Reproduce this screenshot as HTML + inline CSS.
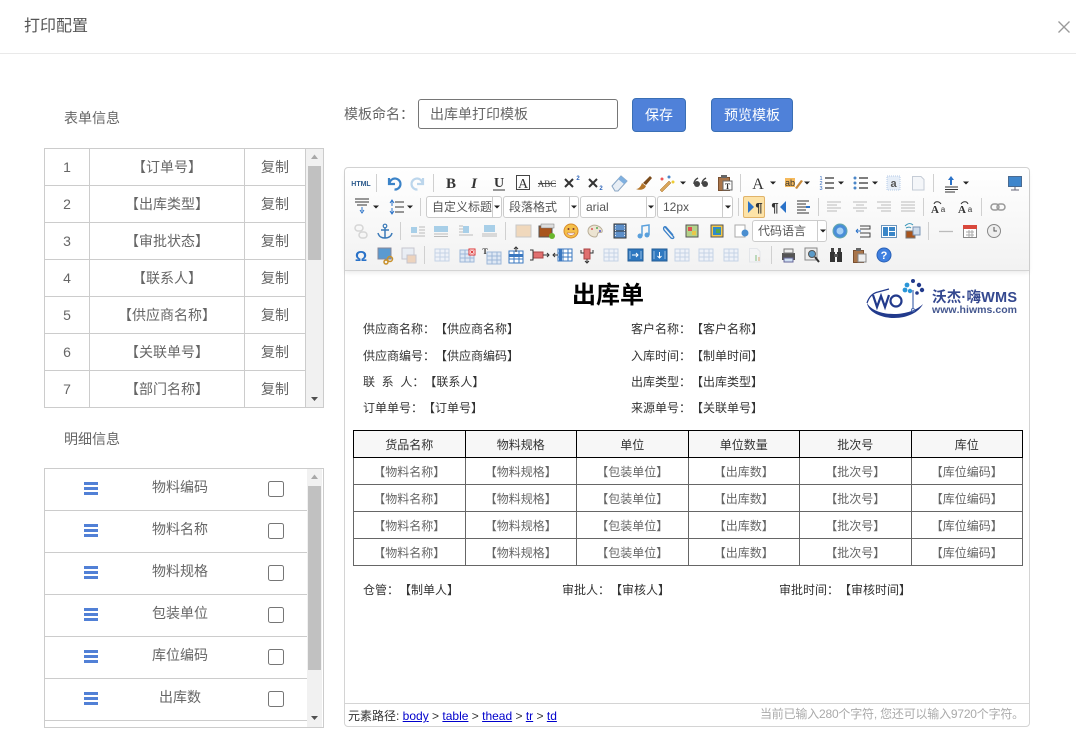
<!DOCTYPE html>
<html lang="zh"><head><meta charset="utf-8"><title>打印配置</title>
<style>
html,body{margin:0;padding:0;background:#fff}
body{width:1076px;height:740px;overflow:hidden;position:relative;font-family:"Liberation Sans","Noto Sans CJK SC",sans-serif;font-size:14px;color:#666;text-spacing-trim:space-all;font-kerning:none}
.a{position:absolute}
.t{position:absolute;white-space:nowrap;line-height:20px;height:20px}
.c{text-align:center}
.l{position:absolute;background:#ccc}
.e{font-size:12px;color:#333;line-height:16px;height:16px}
.sel{position:absolute;background:#fff;border:1px solid #ccc;border-radius:3px;height:20px;box-sizing:content-box;font-size:12px;color:#555;line-height:20px;overflow:hidden;white-space:nowrap}
.sel b{position:absolute;top:0;bottom:0;width:1px;background:#ccc}
.sel span{position:absolute;top:0;overflow:hidden}
table{border-collapse:collapse;table-layout:fixed;position:absolute;left:353px;top:430px;width:670px;font-size:12px}
td,th{text-align:center;font-weight:normal;padding:0}
td{border:1px solid #666;height:26px;color:#666}
th{border:1px solid #000;color:#333;height:26px;background:#f7f7f7}
.cb{position:absolute;left:268px;width:14px;height:14px;border:1px solid #767676;border-radius:2.500px;background:#fff}
.bar{position:absolute;left:84px;width:14px;height:3px;background:#5180d6;box-shadow:0 5px 0 #5180d6,0 10px 0 #5180d6}
</style></head><body>
<div class="t" style="left:24px;top:17px;font-size:16px;color:#555">打印配置</div>
<div class="a" style="left:0;top:53px;width:1076px;height:1px;background:#e9e9e9"></div>
<svg class="a" style="left:1056px;top:19px" width="16" height="16"><path d="M2.500 2.500L13.500 13.500M13.500 2.500L2.500 13.500" stroke="#999" stroke-width="1.300"/></svg>

<div class="t" style="left:64px;top:108px">表单信息</div>
<div class="a" style="left:44px;top:148px;width:278px;height:258px;border:1px solid #ccc"></div>
<div class="l" style="left:89px;top:149px;width:1px;height:258px"></div>
<div class="l" style="left:244px;top:149px;width:1px;height:258px"></div>
<div class="l" style="left:305px;top:149px;width:1px;height:258px"></div>
<div class="l" style="left:45px;top:185px;width:260px;height:1px"></div>
<div class="l" style="left:45px;top:222px;width:260px;height:1px"></div>
<div class="l" style="left:45px;top:259px;width:260px;height:1px"></div>
<div class="l" style="left:45px;top:296px;width:260px;height:1px"></div>
<div class="l" style="left:45px;top:333px;width:260px;height:1px"></div>
<div class="l" style="left:45px;top:370px;width:260px;height:1px"></div>
<div class="a" style="left:306px;top:149px;width:17px;height:258px;background:#f1f1f1"></div>
<div class="a" style="left:308px;top:166px;width:13px;height:94px;background:#c1c1c1"></div>

<div class="t c" style="left:45px;top:157px;width:44px">1</div><div class="t c" style="left:90px;top:157px;width:154px">【订单号】</div><div class="t c" style="left:245px;top:157px;width:60px">复制</div>
<div class="t c" style="left:45px;top:194px;width:44px">2</div><div class="t c" style="left:90px;top:194px;width:154px">【出库类型】</div><div class="t c" style="left:245px;top:194px;width:60px">复制</div>
<div class="t c" style="left:45px;top:231px;width:44px">3</div><div class="t c" style="left:90px;top:231px;width:154px">【审批状态】</div><div class="t c" style="left:245px;top:231px;width:60px">复制</div>
<div class="t c" style="left:45px;top:268px;width:44px">4</div><div class="t c" style="left:90px;top:268px;width:154px">【联系人】</div><div class="t c" style="left:245px;top:268px;width:60px">复制</div>
<div class="t c" style="left:45px;top:305px;width:44px">5</div><div class="t c" style="left:90px;top:305px;width:154px">【供应商名称】</div><div class="t c" style="left:245px;top:305px;width:60px">复制</div>
<div class="t c" style="left:45px;top:342px;width:44px">6</div><div class="t c" style="left:90px;top:342px;width:154px">【关联单号】</div><div class="t c" style="left:245px;top:342px;width:60px">复制</div>
<div class="t c" style="left:45px;top:379px;width:44px">7</div><div class="t c" style="left:90px;top:379px;width:154px">【部门名称】</div><div class="t c" style="left:245px;top:379px;width:60px">复制</div>

<div class="t" style="left:64px;top:429px">明细信息</div>
<div class="a" style="left:44px;top:468px;width:278px;height:258px;border:1px solid #ccc"></div>
<div class="l" style="left:45px;top:510px;width:262px;height:1px"></div>
<div class="l" style="left:45px;top:552px;width:262px;height:1px"></div>
<div class="l" style="left:45px;top:594px;width:262px;height:1px"></div>
<div class="l" style="left:45px;top:636px;width:262px;height:1px"></div>
<div class="l" style="left:45px;top:678px;width:262px;height:1px"></div>
<div class="l" style="left:45px;top:720px;width:262px;height:1px"></div>
<div class="a" style="left:307px;top:469px;width:15px;height:258px;background:#f1f1f1"></div>
<div class="a" style="left:308px;top:486px;width:13px;height:184px;background:#c1c1c1"></div>

<div class="bar" style="top:482px"></div><div class="t c" style="left:120px;top:477px;width:120px">物料编码</div><div class="cb" style="top:481px"></div>
<div class="bar" style="top:524px"></div><div class="t c" style="left:120px;top:519px;width:120px">物料名称</div><div class="cb" style="top:523px"></div>
<div class="bar" style="top:566px"></div><div class="t c" style="left:120px;top:561px;width:120px">物料规格</div><div class="cb" style="top:565px"></div>
<div class="bar" style="top:608px"></div><div class="t c" style="left:120px;top:603px;width:120px">包装单位</div><div class="cb" style="top:607px"></div>
<div class="bar" style="top:650px"></div><div class="t c" style="left:120px;top:645px;width:120px">库位编码</div><div class="cb" style="top:649px"></div>
<div class="bar" style="top:692px"></div><div class="t c" style="left:120px;top:687px;width:120px">出库数</div><div class="cb" style="top:691px"></div>

<div class="t" style="left:344px;top:104px">模板命名：</div>
<div class="a" style="left:418px;top:99px;width:198px;height:28px;border:1px solid #767676;border-radius:3px"></div>
<div class="t" style="left:430px;top:104px">出库单打印模板</div>
<div class="a c" style="left:632px;top:98px;width:52px;height:32px;background:#4f81d9;border:1px solid #3a6fb5;border-radius:4px;color:#fff;line-height:32px">保存</div>
<div class="a c" style="left:711px;top:98px;width:80px;height:32px;background:#4f81d9;border:1px solid #3a6fb5;border-radius:4px;color:#fff;line-height:32px">预览模板</div>

<!-- editor -->
<div class="a" style="left:344px;top:167px;width:684px;height:558px;border:1px solid #d4d4d4;border-radius:4px;background:#fff"></div>
<div class="a" style="left:345px;top:168px;width:684px;height:102px;border-radius:4px 4px 0 0;background:linear-gradient(#fff,#f2f2f2);border-bottom:1px solid #d4d4d4;box-shadow:0 2px 4px rgba(0,0,0,.08)"></div>

<div class="sel" style="left:426px;top:196px;width:74px"><span style="left:5px;width:60px">自定义标题</span><b style="left:65px"></b></div>
<div class="sel" style="left:503px;top:196px;width:74px"><span style="left:5px;width:60px">段落格式</span><b style="left:65px"></b></div>
<div class="sel" style="left:580px;top:196px;width:74px"><span style="left:5px;width:60px">arial</span><b style="left:65px"></b></div>
<div class="sel" style="left:657px;top:196px;width:74px"><span style="left:5px;width:60px">12px</span><b style="left:64px"></b></div>
<div class="sel" style="left:752px;top:220px;width:73px"><span style="left:5px;width:60px">代码语言</span><b style="left:64px"></b></div>
<div class="a" style="left:743px;top:196px;width:20px;height:20px;background:#fde3a7;border:1px solid #e0b36a;border-radius:2px"></div>

<svg class="a" style="left:0;top:0" width="1076" height="740" font-family="Liberation Serif,serif">
<defs>
<polygon id="ar" points="-3,-1.500 3,-1.500 0,1.500" fill="#222"/>
<g id="tb"><rect x="-7" y="-6" width="14" height="12" fill="#dfe8f4" stroke="#9db7d8"/><path d="M-7-2H7M-7 2H7M-2-6V6M3-6V6" stroke="#9db7d8" fill="none"/></g>
<g id="tbd"><rect x="-7" y="-6" width="14" height="12" fill="#eef2f8" stroke="#c5d3e6"/><path d="M-7-2H7M-7 2H7M-2-6V6M3-6V6" stroke="#c5d3e6" fill="none"/></g>
<g id="tbb"><rect x="-7" y="-6" width="14" height="12" fill="#fff" stroke="#3b78c0"/><path d="M-7-2H7M-7 2H7M-2-6V6M3-6V6" stroke="#3b78c0" fill="none"/></g>
<path id="al" d="M-7-5H7M-7-2H3M-7 1H7M-7 4H3" stroke="#bbb" stroke-width="1" fill="none"/>
<g id="ins"><rect x="-7" y="-4" width="6" height="6" fill="#a8cfe8"/><path d="M1-4H7M1-1H7M1 2H7M-7 5H7" stroke="#bbb" fill="none"/></g>
</defs>
<!-- separators -->
<g stroke="#d0d0d0"><path d="M376.500 174V192M433.500 174V192M740.500 174V192M933.500 174V192M420.500 198V216M738.500 198V216M818.500 198V216M923.500 198V216M981.500 198V216M400.500 222V240M505.500 222V240M928.500 222V240M424.500 246V264M771.500 246V264"/></g>
<!-- row 1 -->
<text x="361" y="186" font-family="Liberation Sans" font-size="7" font-weight="bold" fill="#2c5a8c" text-anchor="middle">HTML</text>
<path d="M389 178v6h6M389.500 183.500a5.500 5.500 0 1 1 5 6" fill="none" stroke="#3b83c8" stroke-width="2.200"/>
<path d="M423 178v6h-6M422.500 183.500a5.500 5.500 0 1 0-5 6" fill="none" stroke="#bcd6ec" stroke-width="2.200"/>
<text x="451" y="188" font-size="15" font-weight="bold" fill="#333" text-anchor="middle">B</text>
<text x="474" y="188" font-size="15" font-style="italic" font-weight="bold" fill="#333" text-anchor="middle">I</text>
<text x="499" y="187" font-size="14" font-weight="bold" fill="#333" text-anchor="middle">U</text><path d="M493 190H505" stroke="#333"/>
<rect x="516.500" y="175.500" width="13" height="14" fill="none" stroke="#444"/><text x="523" y="188" font-size="14" fill="#333" text-anchor="middle">A</text>
<text x="547" y="187" font-size="9" fill="#444" text-anchor="middle">ABC</text><path d="M538 183.500H556" stroke="#444"/>
<path d="M565 179l8 8M573 179l-8 8M589 179l8 8M597 179l-8 8" stroke="#333" stroke-width="2"/>
<text x="578" y="180" font-family="Liberation Sans" font-size="6" font-weight="bold" fill="#2a62b8" text-anchor="middle">2</text>
<text x="601" y="190" font-family="Liberation Sans" font-size="6" font-weight="bold" fill="#2a62b8" text-anchor="middle">2</text>
<path d="M612 186l9-10 6 5-9 10h-3z" fill="#e8eef5" stroke="#8aa6c4"/><path d="M618 179l6 5 3-3-6-5z" fill="#7fb0e0"/>
<path d="M636 189c3 0 5-3 6-6l4 3c-1 3-5 5-10 3z" fill="#b5762a"/><path d="M643 183l7-7 2 2-6 7z" fill="#7a4a1a"/>
<path d="M660 190l9-9 2 2-9 9z" fill="#d9a55a" stroke="#a8702a" stroke-width=".5"/><circle cx="662" cy="179" r="1.500" fill="#e55"/><circle cx="669" cy="177" r="1.500" fill="#4a86c8"/><circle cx="673" cy="182" r="1.500" fill="#ec3"/>
<use href="#ar" x="683" y="183"/>
<circle cx="697" cy="184" r="3" fill="#444"/><path d="M694 184c0-3 2-5 4-6" stroke="#444" fill="none" stroke-width="1.500"/><circle cx="705" cy="184" r="3" fill="#444"/><path d="M702 184c0-3 2-5 4-6" stroke="#444" fill="none" stroke-width="1.500"/>
<rect x="718.500" y="177.500" width="11" height="13" fill="#a9754a" stroke="#7a5030"/><rect x="721" y="175" width="6" height="3" fill="#666"/><rect x="723" y="181" width="9" height="9" fill="#fff" stroke="#666"/><text x="727.500" y="189" font-size="8" font-weight="bold" fill="#333" text-anchor="middle">T</text>
<text x="758" y="189" font-size="16" fill="#333" text-anchor="middle">A</text><use href="#ar" x="773" y="183"/>
<rect x="785" y="178" width="10" height="9" fill="#f5b95b"/><text x="790" y="186" font-family="Liberation Sans" font-size="9" fill="#333" text-anchor="middle">ab</text><path d="M795 188l6-8 2 1-6 8z" fill="#c98a3a"/><use href="#ar" x="807" y="183"/>
<path d="M825 178H834M825 183H834M825 188H834" stroke="#333" stroke-width="1.200"/><text x="821" y="180" font-family="Liberation Sans" font-size="5.500" fill="#2a62b8" text-anchor="middle">1</text><text x="821" y="185" font-family="Liberation Sans" font-size="5.500" fill="#2a62b8" text-anchor="middle">2</text><text x="821" y="190" font-family="Liberation Sans" font-size="5.500" fill="#2a62b8" text-anchor="middle">3</text><use href="#ar" x="841" y="183"/>
<path d="M859 178H868M859 183H868M859 188H868" stroke="#333" stroke-width="1.200"/><circle cx="855" cy="178" r="1.500" fill="#4a86c8"/><circle cx="855" cy="183" r="1.500" fill="#4a86c8"/><circle cx="855" cy="188" r="1.500" fill="#4a86c8"/><use href="#ar" x="875" y="183"/>
<rect x="887" y="176" width="13" height="14" fill="#e6eef8" stroke="#b5cbe6" stroke-dasharray="1 1"/><text x="893.500" y="187" font-family="Liberation Sans" font-size="11" font-weight="bold" fill="#555" text-anchor="middle">a</text>
<path d="M912.500 176.500H921l3 3V190H912.500z" fill="#f4f6f9" stroke="#c5ccd6"/>
<path d="M945 187H958M945 189.500H958M945 192H955" stroke="#333"/><path d="M951 176l-3 4h2v5h2v-5h2z" fill="#2a72c8"/><use href="#ar" x="966" y="183"/>
<rect x="1008.500" y="176.500" width="13" height="10" fill="#3f86cc" stroke="#4a6a90"/><path d="M1011 190H1019M1015 187V190" stroke="#667"/>
<!-- row 2 -->
<path d="M355 199H369M355 202H369M357 205H367" stroke="#333"/><path d="M362 207v4M360 210l2 3 2-3" stroke="#2a72c8" fill="none"/><use href="#ar" x="376" y="207"/>
<path d="M395 202H404M395 207H404M395 212H404" stroke="#333"/><path d="M390 203l2-3 2 3M392 201V206M390 211l2 3 2-3M392 208V213" stroke="#2a72c8" fill="none"/><use href="#ar" x="410" y="207"/>
<use href="#ar" x="497" y="207"/><use href="#ar" x="574" y="207"/><use href="#ar" x="651" y="207"/><use href="#ar" x="728" y="207"/><use href="#ar" x="823" y="231"/>
<polygon points="748,201 748,213 754,207" fill="#2a72c8"/><text x="759" y="212" font-family="Liberation Sans" font-size="13" font-weight="bold" fill="#333" text-anchor="middle">¶</text>
<text x="775" y="212" font-family="Liberation Sans" font-size="13" font-weight="bold" fill="#333" text-anchor="middle">¶</text><polygon points="786,201 786,213 780,207" fill="#2a72c8"/>
<path d="M797 201H809M797 204H806M797 207H806M797 210H806M797 213H809" stroke="#333"/><path d="M806 207h4" stroke="#2a72c8" stroke-width="2"/>
<use href="#al" x="834" y="207"/><path d="M853 202H867M856 205H864M853 208H867M856 211H864" stroke="#bbb"/><path d="M877 202H891M881 205H891M877 208H891M881 211H891" stroke="#bbb"/><path d="M901 202H915M901 205H915M901 208H915M901 211H915" stroke="#bbb"/>
<text x="935" y="213" font-size="11" font-weight="bold" fill="#333" text-anchor="middle">A</text><text x="943" y="212" font-family="Liberation Sans" font-size="8" fill="#333" text-anchor="middle">a</text><path d="M934 204c1-3 5-3 7 0" stroke="#333" fill="none"/>
<text x="962" y="213" font-size="11" font-weight="bold" fill="#333" text-anchor="middle">A</text><text x="970" y="212" font-family="Liberation Sans" font-size="8" fill="#333" text-anchor="middle">a</text><path d="M961 204c2-3 6-3 7 0" stroke="#333" fill="none"/>
<rect x="991" y="204" width="8" height="6" rx="3" fill="none" stroke="#999" stroke-width="1.500"/><rect x="997" y="204" width="8" height="6" rx="3" fill="none" stroke="#999" stroke-width="1.500"/>
<!-- row 3 -->
<g opacity=".35"><rect x="355" y="225" width="8" height="6" rx="3" fill="none" stroke="#999" stroke-width="1.500"/><rect x="359" y="232" width="8" height="6" rx="3" fill="none" stroke="#999" stroke-width="1.500"/></g>
<circle cx="385" cy="226" r="1.800" fill="none" stroke="#3b7ab8" stroke-width="1.200"/><path d="M385 228V238M381 230H389M378 233c1 4 4 5 7 5s6-1 7-5" fill="none" stroke="#3b7ab8" stroke-width="1.500"/>
<use href="#ins" x="418" y="231"/><rect x="434" y="226" width="14" height="6" fill="#a8cfe8"/><path d="M434 234H448M434 236.500H448" stroke="#bbb"/>
<rect x="463" y="226" width="6" height="7" fill="#a8cfe8"/><path d="M459 226H463M459 229H463M459 232H463M459 235H473" stroke="#bbb"/><rect x="484" y="225" width="11" height="7" fill="#a8cfe8"/><path d="M482 234H497M482 236H497" stroke="#bbb"/>
<rect x="516" y="225" width="15" height="12" fill="#f0d8bc" stroke="#c8c8c8"/>
<rect x="539" y="226" width="13" height="11" fill="#a8541c" stroke="#555"/><rect x="541" y="224" width="13" height="4" fill="#ddd" stroke="#777" stroke-width=".5"/><circle cx="552" cy="236" r="3" fill="#6ab82e"/>
<circle cx="571" cy="231" r="7" fill="#f5c04a" stroke="#d88a2a"/><circle cx="568.500" cy="229" r="1" fill="#733"/><circle cx="573.500" cy="229" r="1" fill="#733"/><path d="M567 233h8c-1 3-7 3-8 0z" fill="#fff" stroke="#a55" stroke-width=".5"/>
<path d="M588 231c0-5 6-7 10-5 3 1 5 4 4 6-1 1-3 0-4 1s0 4-3 4c-4 0-7-3-7-6z" fill="#ece4d2" stroke="#b9ae98"/><circle cx="592" cy="229" r="1" fill="#d55"/><circle cx="597" cy="228" r="1" fill="#5a5"/><circle cx="600" cy="231" r="1" fill="#55c"/>
<rect x="614" y="224" width="12" height="14" fill="#5d8fc9" stroke="#333"/><path d="M614 231H626" stroke="#333"/><path d="M615.500 225V237M624.500 225V237" stroke="#eee" stroke-dasharray="1 1.500"/>
<circle cx="640" cy="236" r="2.500" fill="#5aa0dc"/><circle cx="647" cy="235" r="2.500" fill="#5aa0dc"/><path d="M642 236V226L649 225V235" stroke="#5aa0dc" fill="none" stroke-width="1.500"/>
<path d="M665 227l8 9c2 2 0 3-2 2l-7-8c-1-2 0-4 2-3l7 8" fill="none" stroke="#3b80c8" stroke-width="1.300"/>
<rect x="686" y="225" width="12" height="12" fill="#b4d28a" stroke="#555"/><rect x="688" y="227" width="4" height="4" fill="#e05050"/><rect x="692" y="231" width="4" height="4" fill="#e8c84a"/>
<rect x="711" y="225" width="12" height="12" fill="#f2c84a" stroke="#555"/><rect x="713" y="227" width="8" height="8" fill="#2f8ac8"/><rect x="716" y="229" width="4" height="4" fill="#55a84a"/>
<rect x="735" y="225" width="10" height="12" fill="#fff" stroke="#aaa"/><circle cx="745" cy="233" r="3.500" fill="#4a8ed0"/>
<circle cx="840" cy="231" r="7" fill="#4a8ed8" stroke="#6aa"/><circle cx="840" cy="231" r="3.500" fill="#a8d0f5"/>
<path d="M860 226H870V229H860M860 233H870V237H860" fill="none" stroke="#444"/><path d="M856 231h5M856 231l2-2M856 231l2 2" stroke="#2a72c8" fill="none"/>
<rect x="881.500" y="225.500" width="15" height="12" fill="#fff" stroke="#6a94bc"/><rect x="883" y="227" width="5" height="9" fill="#3a86c8"/><rect x="889" y="227" width="6" height="4" fill="#3a86c8"/><rect x="889" y="232" width="6" height="4" fill="#3a86c8"/>
<rect x="906" y="231" width="9" height="7" fill="#a8541c" stroke="#777"/><rect x="913" y="227" width="7" height="8" fill="#cfdceb" stroke="#7a94b5"/><path d="M905 226c3-3 6-3 8-1M906 228c2-1 4-1 5 0" stroke="#3a96b8" fill="none"/>
<path d="M939 231.500H953" stroke="#bbb" stroke-width="1.300"/>
<rect x="963.500" y="225.500" width="13" height="12" fill="#fff" stroke="#888"/><rect x="963" y="225" width="14" height="4" fill="#d9483c"/><path d="M966 232H974M966 235H974M969 230V237M972 230V237" stroke="#aaa"/>
<circle cx="994" cy="231" r="6.500" fill="#eee" stroke="#888"/><path d="M994 227V231H997" stroke="#555" fill="none"/>
<!-- row 4 -->
<text x="361" y="261" font-family="Liberation Sans" font-size="15" font-weight="bold" fill="#2a72c8" text-anchor="middle">Ω</text>
<rect x="378" y="248" width="13" height="11" fill="#5a9ad0" stroke="#889"/><circle cx="390" cy="259" r="2.500" fill="none" stroke="#c8902a" stroke-width="1.500"/><circle cx="386" cy="262" r="2" fill="none" stroke="#c8902a" stroke-width="1.500"/>
<g opacity=".5"><rect x="402" y="248" width="12" height="11" fill="#dfe8f4" stroke="#99a"/><rect x="407" y="255" width="9" height="8" fill="#e8b488" stroke="#99a"/></g>
<use href="#tbd" x="442" y="255"/>
<use href="#tb" x="467" y="256"/><rect x="469" y="249" width="6" height="6" fill="#fff" stroke="#d33"/><path d="M470.500 250.500l3 3M473.500 250.500l-3 3" stroke="#d33"/>
<text x="485" y="254" font-size="8" font-weight="bold" fill="#333" text-anchor="middle">T</text><use href="#tb" x="494" y="258"/>
<use href="#tbb" x="516" y="257"/><path d="M516 247v5M514 249l2-2 2 2" stroke="#333" fill="none"/><rect x="509" y="254" width="14" height="3" fill="#3b78c0"/>
<rect x="533" y="252" width="10" height="6" fill="#e07070" stroke="#a44"/><path d="M530 250H533V260H530M543 255H549M547 253l2 2-2 2" stroke="#333" fill="none"/>
<use href="#tbb" x="565" y="255"/><rect x="559" y="249" width="3" height="12" fill="#3b78c0"/><path d="M553 255h5M555 253l-2 2 2 2" stroke="#333" fill="none"/>
<rect x="584" y="249" width="6" height="10" fill="#e07070" stroke="#a44"/><path d="M581 250V253H584M593 250V253H590M587 259V263M585 261l2 2 2-2" stroke="#333" fill="none"/>
<use href="#tbd" x="611" y="255"/>
<rect x="628" y="249" width="15" height="12" fill="#2e78c0" stroke="#245c94"/><path d="M630 251.500V259M641 251.500V259" stroke="#fff" stroke-dasharray="1 1"/><path d="M632 255h6M636 253l2 2-2 2" stroke="#fff" fill="none"/>
<rect x="652" y="249" width="15" height="12" fill="#2e78c0" stroke="#245c94"/><path d="M654 251.500V259M665 251.500V259" stroke="#fff" stroke-dasharray="1 1"/><path d="M659.500 252v6M657.500 256l2 2 2-2" stroke="#fff" fill="none"/>
<use href="#tbd" x="682" y="255"/><use href="#tbd" x="706" y="255"/><use href="#tbd" x="731" y="255"/>
<g opacity=".35"><path d="M749.500 248.500H757l3 3V262H749.500z" fill="#f4f6f9" stroke="#c5ccd6"/><rect x="755" y="255" width="2" height="6" fill="#5a5"/><rect x="758" y="257" width="2" height="4" fill="#c84"/></g>
<rect x="782" y="253" width="13" height="7" fill="#555"/><rect x="784" y="249" width="9" height="4" fill="#eee" stroke="#777"/><rect x="784" y="258" width="9" height="4" fill="#cfe0f2" stroke="#669"/>
<rect x="805" y="248" width="12" height="12" fill="#eee" stroke="#888"/><circle cx="812" cy="254" r="3.500" fill="#5a9ac8" stroke="#555"/><path d="M815 257l4 5" stroke="#333" stroke-width="2"/>
<rect x="830" y="252" width="5" height="10" fill="#333"/><rect x="837" y="252" width="5" height="10" fill="#333"/><rect x="831" y="248" width="3" height="4" fill="#444"/><rect x="838" y="248" width="3" height="4" fill="#444"/><rect x="834" y="254" width="4" height="3" fill="#555"/>
<rect x="853.500" y="250.500" width="10" height="12" fill="#a9754a" stroke="#7a5030"/><rect x="856" y="248" width="5" height="3" fill="#666"/><rect x="858" y="254" width="8" height="8" fill="#eee" stroke="#888"/>
<circle cx="884" cy="255" r="7" fill="#3f7fe0" stroke="#2a62b8"/><text x="884" y="259" font-family="Liberation Sans" font-size="11" font-weight="bold" fill="#fff" text-anchor="middle">?</text>
<!-- scrollbars -->
<polygon points="311,159 318,159 314.500,154.500" fill="#a8a8a8"/><polygon points="311,397 318,397 314.500,401" fill="#505050"/>
<polygon points="311,479 318,479 314.500,474.500" fill="#a8a8a8"/><polygon points="311,716 318,716 314.500,720" fill="#505050"/>
<!-- logo -->
<path d="M867 303c1 9 14 15 27 15 14 0 25-6 29-14-6 6-17 10-29 10-13 0-23-4-27-11z" fill="#223a8c"/>
<path d="M867 303c2-6 6-10 11-11l11-3" fill="none" stroke="#223a8c" stroke-width="1.200"/>
<path d="M873 295l4 12 4-11 4 11 4-12" fill="none" stroke="#223a8c" stroke-width="2.200"/>
<circle cx="896" cy="301" r="5.500" fill="none" stroke="#223a8c" stroke-width="2.200"/>
<path d="M913 290V309" stroke="#4a6ab0" stroke-width="1.200"/><circle cx="913" cy="310" r="1.500" fill="none" stroke="#4a6ab0"/>
<circle cx="913" cy="281" r="2" fill="#223a8c"/><circle cx="907" cy="285" r="2.400" fill="#2a96d8"/><circle cx="919" cy="285" r="2.200" fill="#223a8c"/><circle cx="905" cy="290" r="2.400" fill="#2a96d8"/><circle cx="922" cy="290" r="2.200" fill="#223a8c"/><circle cx="910" cy="291" r="2.200" fill="#2a96d8"/><circle cx="917" cy="293" r="1.800" fill="#223a8c"/>
<text x="932" y="302" font-family="Liberation Sans,Noto Sans CJK SC,sans-serif" font-size="14.500" font-weight="bold" fill="#34488f" textLength="85">沃杰·嗨WMS</text>
<text x="932" y="313" font-family="Liberation Sans" font-size="10.500" font-weight="bold" fill="#44578f" textLength="85">www.hiwms.com</text>
</svg>

<!-- content -->
<div class="a c" style="left:508px;top:280px;width:200px;font-size:24px;font-weight:bold;color:#000;line-height:32px">出库单</div>
<div class="t e" style="left:363px;top:321px">供应商名称：【供应商名称】</div><div class="t e" style="left:631px;top:321px">客户名称：【客户名称】</div>
<div class="t e" style="left:363px;top:348px">供应商编号：【供应商编码】</div><div class="t e" style="left:631px;top:348px">入库时间：【制单时间】</div>
<div class="t e" style="left:363px;top:374px">联&nbsp;&nbsp;系&nbsp;&nbsp;人：【联系人】</div><div class="t e" style="left:631px;top:374px">出库类型：【出库类型】</div>
<div class="t e" style="left:363px;top:400px">订单单号：【订单号】</div><div class="t e" style="left:631px;top:400px">来源单号：【关联单号】</div>

<table>
<tr><th>货品名称</th><th>物料规格</th><th>单位</th><th>单位数量</th><th>批次号</th><th>库位</th></tr>
<tr><td>【物料名称】</td><td>【物料规格】</td><td>【包装单位】</td><td>【出库数】</td><td>【批次号】</td><td>【库位编码】</td></tr>
<tr><td>【物料名称】</td><td>【物料规格】</td><td>【包装单位】</td><td>【出库数】</td><td>【批次号】</td><td>【库位编码】</td></tr>
<tr><td>【物料名称】</td><td>【物料规格】</td><td>【包装单位】</td><td>【出库数】</td><td>【批次号】</td><td>【库位编码】</td></tr>
<tr><td>【物料名称】</td><td>【物料规格】</td><td>【包装单位】</td><td>【出库数】</td><td>【批次号】</td><td>【库位编码】</td></tr>
</table>

<div class="t e" style="left:363px;top:582px">仓管：【制单人】</div>
<div class="t e" style="left:562px;top:582px">审批人：【审核人】</div>
<div class="t e" style="left:779px;top:582px">审批时间：【审核时间】</div>

<div class="a" style="left:345px;top:703px;width:684px;height:1px;background:#d4d4d4"></div>
<div class="t" style="left:348px;top:706px;font-size:12px;color:#333">元素路径: <u style="color:#00c">body</u> &gt; <u style="color:#00c">table</u> &gt; <u style="color:#00c">thead</u> &gt; <u style="color:#00c">tr</u> &gt; <u style="color:#00c">td</u></div>
<div class="t" style="right:52px;top:704px;font-size:12px;color:#aaa;letter-spacing:-.2px">当前已输入280个字符, 您还可以输入9720个字符。</div>
</body></html>
